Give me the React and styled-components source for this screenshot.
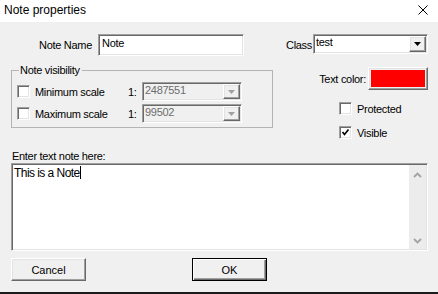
import { Fragment } from 'react';
import styled, { createGlobalStyle, css } from 'styled-components';

const GlobalStyle = createGlobalStyle`
	body {
		margin: 0;
		background: #f0f0f0;
	}
`;

const sunken = css`
	border-style: solid;
	border-width: 1px;
	border-color: #a0a0a0 #fff #fff #a0a0a0;
	box-shadow: inset 1px 1px #696969, inset -1px -1px #e3e3e3;
`;

const raised = css`
	border-style: solid;
	border-width: 1px;
	border-color: #fff #696969 #696969 #fff;
	box-shadow: inset -1px -1px #a0a0a0, inset 1px 1px #e3e3e3;
`;

const Window = styled.div`
	width: 438px;
	height: 294px;
	box-sizing: border-box;
	display: flex;
	flex-direction: column;
	background: #f0f0f0;
	border-bottom: 2px solid #1a1a1a;
	font-family: 'Liberation Sans', Arial, sans-serif;
	font-size: 11px;
	letter-spacing: -0.3px;
	color: #000;
`;

const TitleBar = styled.div`
	height: 22px;
	flex: none;
	display: flex;
	align-items: center;
	justify-content: space-between;
	padding: 0 10px 2px 4px;
	box-sizing: border-box;
	background: #fff;
	font-size: 12px;
	letter-spacing: 0;
`;

const Body = styled.div`
	display: flex;
	flex-direction: column;
	padding: 12px 10px 10px 11px;
`;

const TopRow = styled.div`
	display: flex;
	align-items: flex-start;
	height: 22px;
`;

const FieldLabel = styled.span`
	align-self: center;
	width: ${(p) => p.$width || 'auto'};
	text-align: right;
	margin-right: ${(p) => p.$gap || 0}px;
	margin-left: ${(p) => (p.$push ? 'auto' : '0')};
	line-height: 14px;
	white-space: nowrap;
`;

const TextInput = styled.div`
	${sunken};
	width: 146px;
	height: 22px;
	box-sizing: border-box;
	background: #fff;
	padding: 1px 3px;
	line-height: 14px;
`;

const Combo = styled.div`
	${sunken};
	width: ${(p) => p.$width}px;
	height: ${(p) => p.$height}px;
	box-sizing: border-box;
	display: flex;
	align-items: stretch;
	background: ${(p) => (p.$disabled ? '#f0f0f0' : '#fff')};
	color: ${(p) => (p.$disabled ? '#6d6d6d' : '#000')};
`;

const ComboValue = styled.span`
	flex: 1;
	padding: 0 2px;
	line-height: ${(p) => p.$lh}px;
	overflow: hidden;
`;

const DropButton = styled.span`
	${raised};
	width: 17px;
	margin: 1px 1px 1px 0;
	box-sizing: border-box;
	background: #f0f0f0;
	display: flex;
	align-items: center;
	justify-content: center;
`;

const MiddleRow = styled.div`
	display: flex;
	align-items: flex-start;
	margin-top: 11px;
`;

const Group = styled.div`
	position: relative;
	width: 262px;
	height: 58px;
	box-sizing: border-box;
	margin-top: 3px;
	border: 1px solid #b4b4b4;
	padding: 11px 0 0 5px;
	display: grid;
	grid-template-columns: 18px 93px 14px 100px;
	grid-auto-rows: 19px;
	row-gap: 3px;
	align-items: center;
`;

const Legend = styled.span`
	position: absolute;
	top: -8px;
	left: 7px;
	padding: 0 2px 0 1px;
	background: #f0f0f0;
	line-height: 14px;
`;

const Box = styled.span`
	${sunken};
	width: 13px;
	height: 13px;
	box-sizing: border-box;
	background: #fff;
	display: flex;
	align-items: center;
	justify-content: center;
`;

const ScaleLabel = styled.span`
	line-height: 14px;
	white-space: nowrap;
`;

const RightColumn = styled.div`
	flex: 1;
	display: flex;
	flex-direction: column;
`;

const ColorRow = styled.div`
	display: flex;
	align-items: center;
	justify-content: flex-end;
`;

const ColorButton = styled.div`
	${raised};
	width: 60px;
	height: 23px;
	box-sizing: border-box;
	padding: 2px;
	background: #f0f0f0;
	margin-left: 2px;
`;

const Swatch = styled.div`
	height: 100%;
	background: ${(p) => p.$color};
`;

const CheckList = styled.div`
	display: flex;
	flex-direction: column;
	gap: 11px;
	margin: 12px 0 0 66px;
`;

const CheckRow = styled.label`
	display: flex;
	align-items: center;
	gap: 5px;
	height: 13px;
	line-height: 14px;
`;

const NoteLabel = styled.div`
	margin-top: 10px;
	line-height: 14px;
	padding-left: 1px;
`;

const NoteBox = styled.div`
	${sunken};
	height: 88px;
	box-sizing: border-box;
	display: flex;
	background: #fff;
`;

const NoteText = styled.div`
	flex: 1;
	padding: 2px 2px 0 2px;
	font-size: 12px;
	letter-spacing: -0.55px;
	line-height: 14px;
`;

const Caret = styled.span`
	display: inline-block;
	width: 1px;
	height: 13px;
	background: #000;
	vertical-align: -2px;
`;

const ScrollTrack = styled.div`
	width: 17px;
	margin: 1px 1px 1px 0;
	background: #ececec;
	display: flex;
	flex-direction: column;
	align-items: center;
	justify-content: space-between;
	padding: 7px 0 5px;
	box-sizing: border-box;
`;

const ButtonRow = styled.div`
	display: flex;
	gap: 106px;
	margin-top: 7px;
`;

const DialogButton = styled.button`
	width: 75px;
	height: 23px;
	box-sizing: border-box;
	padding: 0;
	font: inherit;
	color: #000;
	background: #f0f0f0;
	${(p) =>
		p.$primary
			? css`
					border: 1px solid #000;
					box-shadow: inset 1px 1px #fff, inset -1px -1px #696969, inset -2px -2px #a0a0a0;
			  `
			: raised};
`;

const Arrow = ({ color }) => (
	<svg width="7" height="4" viewBox="0 0 7 4">
		<polygon points="0,0 7,0 3.5,4" fill={color} />
	</svg>
);

const Chevron = ({ up }) => (
	<svg width="9" height="6" viewBox="0 0 9 6">
		<polyline
			points={up ? '1,5 4.5,1.5 8,5' : '1,1 4.5,4.5 8,1'}
			fill="none"
			stroke="#a3a3a3"
			strokeWidth="1.8"
		/>
	</svg>
);

const CheckBox = ({ checked }) => (
	<Box>
		{checked && (
			<svg width="9" height="9" viewBox="0 0 9 9">
				<polyline points="1.5,4 3.5,6.5 7.5,1.5" fill="none" stroke="#000" strokeWidth="1.7" />
			</svg>
		)}
	</Box>
);

const scales = [
	{ label: 'Minimum scale', value: '2487551' },
	{ label: 'Maximum scale', value: '99502' },
];

export default function App() {
	return (
		<>
			<GlobalStyle />
			<Window>
				<TitleBar>
					<span>Note properties</span>
					<svg width="10" height="10" viewBox="0 0 10 10">
						<path d="M0.5 0.5 L9.5 9.5 M9.5 0.5 L0.5 9.5" stroke="#000" strokeWidth="1" />
					</svg>
				</TitleBar>
				<Body>
					<TopRow>
						<FieldLabel $width="81px" $gap={6}>
							Note Name
						</FieldLabel>
						<TextInput>Note</TextInput>
						<FieldLabel $push $gap={1}>
							Class
						</FieldLabel>
						<Combo $width={115} $height={20}>
							<ComboValue $lh={15}>test</ComboValue>
							<DropButton>
								<Arrow color="#000" />
							</DropButton>
						</Combo>
					</TopRow>
					<MiddleRow>
						<Group>
							<Legend>Note visibility</Legend>
							{scales.map((s) => (
								<Fragment key={s.label}>
									<CheckBox />
									<ScaleLabel>{s.label}</ScaleLabel>
									<ScaleLabel>1:</ScaleLabel>
									<Combo $width={100} $height={19} $disabled>
										<ComboValue $lh={15}>{s.value}</ComboValue>
										<DropButton>
											<Arrow color="#a0a0a0" />
										</DropButton>
									</Combo>
								</Fragment>
							))}
						</Group>
						<RightColumn>
							<ColorRow>
								<span>Text color:</span>
								<ColorButton>
									<Swatch $color="#ff0000" />
								</ColorButton>
							</ColorRow>
							<CheckList>
								<CheckRow>
									<CheckBox />
									Protected
								</CheckRow>
								<CheckRow>
									<CheckBox checked />
									Visible
								</CheckRow>
							</CheckList>
						</RightColumn>
					</MiddleRow>
					<NoteLabel>Enter text note here:</NoteLabel>
					<NoteBox>
						<NoteText>
							This is a Note
							<Caret />
						</NoteText>
						<ScrollTrack>
							<Chevron up />
							<Chevron />
						</ScrollTrack>
					</NoteBox>
					<ButtonRow>
						<DialogButton>Cancel</DialogButton>
						<DialogButton $primary>OK</DialogButton>
					</ButtonRow>
				</Body>
			</Window>
		</>
	);
}
